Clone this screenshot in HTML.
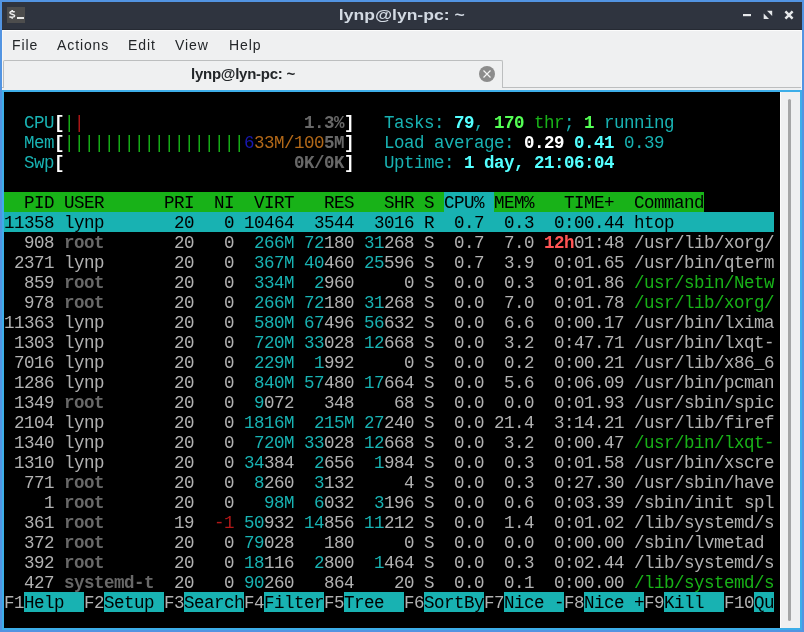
<!DOCTYPE html>
<html><head><meta charset="utf-8">
<style>
html,body{margin:0;padding:0;}
body{will-change:transform;width:804px;height:632px;position:relative;overflow:hidden;background:#5294e2;font-family:"Liberation Sans",sans-serif;}
.a{position:absolute;}
#title{left:2px;top:2px;width:800px;height:28px;background:#2f343f;}
#title .bot{left:0;top:27px;width:800px;height:1px;background:#262a33;}
#icon{left:5px;top:5px;width:18px;height:16px;background:#4d4d4d;}
#ttext{left:0;top:4px;width:800px;text-align:center;color:#d3dae3;font-weight:bold;font-size:15px;line-height:18px;transform:scaleX(1.17);transform-origin:401.5px 0;}
#menu{left:2px;top:30px;width:800px;height:60px;background:#eff0f1;}
#menu .hl{left:0;top:0;width:800px;height:1px;background:#fcfcfc;}
#menu .hl2{left:0;top:0;width:1px;height:60px;background:#f8f6f4;}
.mi{position:absolute;top:5px;font-size:14px;line-height:20px;color:#232629;letter-spacing:0.9px;}
#tabline{left:0;top:57px;width:799px;height:1px;background:#bcbebf;}
#tab{left:1px;top:30px;width:500px;height:28px;background:#eff0f1;border:1px solid #bcbebf;border-bottom:none;border-radius:2px 2px 0 0;box-sizing:border-box;}
#tabtext{left:-9px;top:36px;width:500px;text-align:center;font-weight:bold;font-size:15px;line-height:16px;color:#232629;letter-spacing:-0.25px;}
#tabclose{left:477px;top:36px;width:16px;height:16px;border-radius:50%;background:#8c8c8c;}
#frame{left:2px;top:90px;width:800px;height:540px;background:#3daee9;}
#term{left:4px;top:92px;width:776px;height:536px;background:#000;overflow:hidden;}
#term span{position:absolute;height:20px;line-height:22px;white-space:pre;font-family:"Liberation Mono",monospace;font-size:17.5px;letter-spacing:-0.5px;}
#sb{left:780px;top:92px;width:20px;height:536px;background:#eff0f1;}
#sb .l{left:0;top:0;width:1px;height:536px;background:#fcfcfc;}
#sb .h{left:8px;top:7px;width:3px;height:522px;border-radius:2px;background:#a5a6a7;}
</style></head><body>
<div id="title" class="a">
  <div class="a bot"></div>
  <div id="icon" class="a">
    <svg width="18" height="16" viewBox="0 0 18 16" style="position:absolute;left:0;top:0">
      <path d="M7.7,5.1 C6.8,4.3 3.0,4.1 2.9,5.9 C2.8,7.4 7.7,7.0 7.7,8.7 C7.7,10.4 3.4,10.4 2.4,9.7" stroke="#eeeeee" stroke-width="1.45" fill="none"/><path d="M5.2,3.1 V4.6 M5.2,10.2 V11.7" stroke="#eeeeee" stroke-width="1.6" fill="none"/>
      <rect x="10" y="10" width="7" height="2" fill="#e8e8e8"/>
    </svg>
  </div>
  <div id="ttext" class="a">lynp@lyn-pc: ~</div>
  <svg class="a" style="left:0;top:0" width="800" height="28">
    <rect x="741" y="12" width="8" height="2.2" fill="#e6e8ea"/>
    <polygon points="765,8.7 770.2,8.7 770.2,14" fill="#e6e8ea"/>
    <polygon points="761.7,11.5 761.7,17 767,17" fill="#e6e8ea"/>
    <path d="M783.4,9.4 L790.6,16.6 M790.6,9.4 L783.4,16.6" stroke="#e6e8ea" stroke-width="2.5" stroke-linecap="butt"/>
  </svg>
</div>
<div id="menu" class="a">
  <div class="a hl"></div>
  <div class="a hl2"></div><div class="a" style="left:799px;top:0;width:1px;height:60px;background:#f8f6f4"></div>
  <div class="mi" style="left:10px">File</div>
  <div class="mi" style="left:55px">Actions</div>
  <div class="mi" style="left:126px">Edit</div>
  <div class="mi" style="left:173px">View</div>
  <div class="mi" style="left:227px">Help</div>
  <div id="tabline" class="a"></div>
  <div id="tab" class="a"></div>
  <div id="tabtext" class="a">lynp@lyn-pc: ~</div>
  <div id="tabclose" class="a">
    <svg width="16" height="16" style="position:absolute;left:0;top:0"><path d="M4.5,4.5 L11.5,11.5 M11.5,4.5 L4.5,11.5" stroke="#f4f4f4" stroke-width="1.2"/></svg>
  </div>
</div>
<div id="frame" class="a"></div>
<div id="term" class="a">
<span style="left:20px;top:20px;width:30px;color:#18b2b2;">CPU</span>
<span style="left:50px;top:20px;width:10px;color:#ffffff;font-weight:bold;">[</span>
<span style="left:60px;top:20px;width:10px;color:#18b218;">|</span>
<span style="left:70px;top:20px;width:10px;color:#b21818;">|</span>
<span style="left:300px;top:20px;width:40px;color:#686868;font-weight:bold;">1.3%</span>
<span style="left:340px;top:20px;width:10px;color:#ffffff;font-weight:bold;">]</span>
<span style="left:20px;top:40px;width:30px;color:#18b2b2;">Mem</span>
<span style="left:50px;top:40px;width:10px;color:#ffffff;font-weight:bold;">[</span>
<span style="left:60px;top:40px;width:180px;color:#18b218;">||||||||||||||||||</span>
<span style="left:240px;top:40px;width:10px;color:#1818b2;">6</span>
<span style="left:250px;top:40px;width:70px;color:#b26818;">33M/100</span>
<span style="left:320px;top:40px;width:20px;color:#686868;font-weight:bold;">5M</span>
<span style="left:340px;top:40px;width:10px;color:#ffffff;font-weight:bold;">]</span>
<span style="left:20px;top:60px;width:30px;color:#18b2b2;">Swp</span>
<span style="left:50px;top:60px;width:10px;color:#ffffff;font-weight:bold;">[</span>
<span style="left:290px;top:60px;width:50px;color:#686868;font-weight:bold;">0K/0K</span>
<span style="left:340px;top:60px;width:10px;color:#ffffff;font-weight:bold;">]</span>
<span style="left:380px;top:20px;width:70px;color:#18b2b2;">Tasks: </span>
<span style="left:450px;top:20px;width:20px;color:#54ffff;font-weight:bold;">79</span>
<span style="left:470px;top:20px;width:20px;color:#18b2b2;">, </span>
<span style="left:490px;top:20px;width:30px;color:#54ff54;font-weight:bold;">170</span>
<span style="left:530px;top:20px;width:30px;color:#18b218;">thr</span>
<span style="left:560px;top:20px;width:20px;color:#18b2b2;">; </span>
<span style="left:580px;top:20px;width:10px;color:#54ff54;font-weight:bold;">1</span>
<span style="left:600px;top:20px;width:70px;color:#18b2b2;">running</span>
<span style="left:380px;top:40px;width:140px;color:#18b2b2;">Load average: </span>
<span style="left:520px;top:40px;width:40px;color:#ffffff;font-weight:bold;">0.29</span>
<span style="left:570px;top:40px;width:40px;color:#54ffff;font-weight:bold;">0.41</span>
<span style="left:620px;top:40px;width:40px;color:#18b2b2;">0.39</span>
<span style="left:380px;top:60px;width:80px;color:#18b2b2;">Uptime: </span>
<span style="left:460px;top:60px;width:150px;color:#54ffff;font-weight:bold;">1 day, 21:06:04</span>
<span style="left:0px;top:100px;width:440px;color:#000000;background:#18b218;">  PID USER      PRI  NI  VIRT   RES   SHR S </span>
<span style="left:440px;top:100px;width:50px;color:#000000;background:#18b2b2;">CPU% </span>
<span style="left:490px;top:100px;width:210px;color:#000000;background:#18b218;">MEM%   TIME+  Command</span>
<span style="left:0px;top:120px;width:770px;color:#000000;background:#18b2b2;">11358 lynp       20   0 10464  3544  3016 R  0.7  0.3  0:00.44 htop          </span>
<span style="left:0px;top:140px;width:50px;color:#b2b2b2;">  908</span>
<span style="left:60px;top:140px;width:40px;color:#686868;font-weight:bold;">root</span>
<span style="left:160px;top:140px;width:30px;color:#b2b2b2;"> 20</span>
<span style="left:200px;top:140px;width:30px;color:#b2b2b2;">  0</span>
<span style="left:240px;top:140px;width:50px;color:#18b2b2;"> 266M</span>
<span style="left:300px;top:140px;width:20px;color:#18b2b2;">72</span>
<span style="left:320px;top:140px;width:30px;color:#b2b2b2;">180</span>
<span style="left:360px;top:140px;width:20px;color:#18b2b2;">31</span>
<span style="left:380px;top:140px;width:30px;color:#b2b2b2;">268</span>
<span style="left:420px;top:140px;width:10px;color:#b2b2b2;">S</span>
<span style="left:440px;top:140px;width:40px;color:#b2b2b2;"> 0.7</span>
<span style="left:490px;top:140px;width:40px;color:#b2b2b2;"> 7.0</span>
<span style="left:540px;top:140px;width:30px;color:#ff5454;font-weight:bold;">12h</span>
<span style="left:570px;top:140px;width:50px;color:#b2b2b2;">01:48</span>
<span style="left:630px;top:140px;width:140px;color:#b2b2b2;">/usr/lib/xorg/</span>
<span style="left:0px;top:160px;width:50px;color:#b2b2b2;"> 2371</span>
<span style="left:60px;top:160px;width:40px;color:#b2b2b2;">lynp</span>
<span style="left:160px;top:160px;width:30px;color:#b2b2b2;"> 20</span>
<span style="left:200px;top:160px;width:30px;color:#b2b2b2;">  0</span>
<span style="left:240px;top:160px;width:50px;color:#18b2b2;"> 367M</span>
<span style="left:300px;top:160px;width:20px;color:#18b2b2;">40</span>
<span style="left:320px;top:160px;width:30px;color:#b2b2b2;">460</span>
<span style="left:360px;top:160px;width:20px;color:#18b2b2;">25</span>
<span style="left:380px;top:160px;width:30px;color:#b2b2b2;">596</span>
<span style="left:420px;top:160px;width:10px;color:#b2b2b2;">S</span>
<span style="left:440px;top:160px;width:40px;color:#b2b2b2;"> 0.7</span>
<span style="left:490px;top:160px;width:40px;color:#b2b2b2;"> 3.9</span>
<span style="left:540px;top:160px;width:80px;color:#b2b2b2;"> 0:01.65</span>
<span style="left:630px;top:160px;width:140px;color:#b2b2b2;">/usr/bin/qterm</span>
<span style="left:0px;top:180px;width:50px;color:#b2b2b2;">  859</span>
<span style="left:60px;top:180px;width:40px;color:#686868;font-weight:bold;">root</span>
<span style="left:160px;top:180px;width:30px;color:#b2b2b2;"> 20</span>
<span style="left:200px;top:180px;width:30px;color:#b2b2b2;">  0</span>
<span style="left:240px;top:180px;width:50px;color:#18b2b2;"> 334M</span>
<span style="left:310px;top:180px;width:10px;color:#18b2b2;">2</span>
<span style="left:320px;top:180px;width:30px;color:#b2b2b2;">960</span>
<span style="left:400px;top:180px;width:10px;color:#b2b2b2;">0</span>
<span style="left:420px;top:180px;width:10px;color:#b2b2b2;">S</span>
<span style="left:440px;top:180px;width:40px;color:#b2b2b2;"> 0.0</span>
<span style="left:490px;top:180px;width:40px;color:#b2b2b2;"> 0.3</span>
<span style="left:540px;top:180px;width:80px;color:#b2b2b2;"> 0:01.86</span>
<span style="left:630px;top:180px;width:140px;color:#18b218;">/usr/sbin/Netw</span>
<span style="left:0px;top:200px;width:50px;color:#b2b2b2;">  978</span>
<span style="left:60px;top:200px;width:40px;color:#686868;font-weight:bold;">root</span>
<span style="left:160px;top:200px;width:30px;color:#b2b2b2;"> 20</span>
<span style="left:200px;top:200px;width:30px;color:#b2b2b2;">  0</span>
<span style="left:240px;top:200px;width:50px;color:#18b2b2;"> 266M</span>
<span style="left:300px;top:200px;width:20px;color:#18b2b2;">72</span>
<span style="left:320px;top:200px;width:30px;color:#b2b2b2;">180</span>
<span style="left:360px;top:200px;width:20px;color:#18b2b2;">31</span>
<span style="left:380px;top:200px;width:30px;color:#b2b2b2;">268</span>
<span style="left:420px;top:200px;width:10px;color:#b2b2b2;">S</span>
<span style="left:440px;top:200px;width:40px;color:#b2b2b2;"> 0.0</span>
<span style="left:490px;top:200px;width:40px;color:#b2b2b2;"> 7.0</span>
<span style="left:540px;top:200px;width:80px;color:#b2b2b2;"> 0:01.78</span>
<span style="left:630px;top:200px;width:140px;color:#18b218;">/usr/lib/xorg/</span>
<span style="left:0px;top:220px;width:50px;color:#b2b2b2;">11363</span>
<span style="left:60px;top:220px;width:40px;color:#b2b2b2;">lynp</span>
<span style="left:160px;top:220px;width:30px;color:#b2b2b2;"> 20</span>
<span style="left:200px;top:220px;width:30px;color:#b2b2b2;">  0</span>
<span style="left:240px;top:220px;width:50px;color:#18b2b2;"> 580M</span>
<span style="left:300px;top:220px;width:20px;color:#18b2b2;">67</span>
<span style="left:320px;top:220px;width:30px;color:#b2b2b2;">496</span>
<span style="left:360px;top:220px;width:20px;color:#18b2b2;">56</span>
<span style="left:380px;top:220px;width:30px;color:#b2b2b2;">632</span>
<span style="left:420px;top:220px;width:10px;color:#b2b2b2;">S</span>
<span style="left:440px;top:220px;width:40px;color:#b2b2b2;"> 0.0</span>
<span style="left:490px;top:220px;width:40px;color:#b2b2b2;"> 6.6</span>
<span style="left:540px;top:220px;width:80px;color:#b2b2b2;"> 0:00.17</span>
<span style="left:630px;top:220px;width:140px;color:#b2b2b2;">/usr/bin/lxima</span>
<span style="left:0px;top:240px;width:50px;color:#b2b2b2;"> 1303</span>
<span style="left:60px;top:240px;width:40px;color:#b2b2b2;">lynp</span>
<span style="left:160px;top:240px;width:30px;color:#b2b2b2;"> 20</span>
<span style="left:200px;top:240px;width:30px;color:#b2b2b2;">  0</span>
<span style="left:240px;top:240px;width:50px;color:#18b2b2;"> 720M</span>
<span style="left:300px;top:240px;width:20px;color:#18b2b2;">33</span>
<span style="left:320px;top:240px;width:30px;color:#b2b2b2;">028</span>
<span style="left:360px;top:240px;width:20px;color:#18b2b2;">12</span>
<span style="left:380px;top:240px;width:30px;color:#b2b2b2;">668</span>
<span style="left:420px;top:240px;width:10px;color:#b2b2b2;">S</span>
<span style="left:440px;top:240px;width:40px;color:#b2b2b2;"> 0.0</span>
<span style="left:490px;top:240px;width:40px;color:#b2b2b2;"> 3.2</span>
<span style="left:540px;top:240px;width:80px;color:#b2b2b2;"> 0:47.71</span>
<span style="left:630px;top:240px;width:140px;color:#b2b2b2;">/usr/bin/lxqt-</span>
<span style="left:0px;top:260px;width:50px;color:#b2b2b2;"> 7016</span>
<span style="left:60px;top:260px;width:40px;color:#b2b2b2;">lynp</span>
<span style="left:160px;top:260px;width:30px;color:#b2b2b2;"> 20</span>
<span style="left:200px;top:260px;width:30px;color:#b2b2b2;">  0</span>
<span style="left:240px;top:260px;width:50px;color:#18b2b2;"> 229M</span>
<span style="left:310px;top:260px;width:10px;color:#18b2b2;">1</span>
<span style="left:320px;top:260px;width:30px;color:#b2b2b2;">992</span>
<span style="left:400px;top:260px;width:10px;color:#b2b2b2;">0</span>
<span style="left:420px;top:260px;width:10px;color:#b2b2b2;">S</span>
<span style="left:440px;top:260px;width:40px;color:#b2b2b2;"> 0.0</span>
<span style="left:490px;top:260px;width:40px;color:#b2b2b2;"> 0.2</span>
<span style="left:540px;top:260px;width:80px;color:#b2b2b2;"> 0:00.21</span>
<span style="left:630px;top:260px;width:140px;color:#b2b2b2;">/usr/lib/x86_6</span>
<span style="left:0px;top:280px;width:50px;color:#b2b2b2;"> 1286</span>
<span style="left:60px;top:280px;width:40px;color:#b2b2b2;">lynp</span>
<span style="left:160px;top:280px;width:30px;color:#b2b2b2;"> 20</span>
<span style="left:200px;top:280px;width:30px;color:#b2b2b2;">  0</span>
<span style="left:240px;top:280px;width:50px;color:#18b2b2;"> 840M</span>
<span style="left:300px;top:280px;width:20px;color:#18b2b2;">57</span>
<span style="left:320px;top:280px;width:30px;color:#b2b2b2;">480</span>
<span style="left:360px;top:280px;width:20px;color:#18b2b2;">17</span>
<span style="left:380px;top:280px;width:30px;color:#b2b2b2;">664</span>
<span style="left:420px;top:280px;width:10px;color:#b2b2b2;">S</span>
<span style="left:440px;top:280px;width:40px;color:#b2b2b2;"> 0.0</span>
<span style="left:490px;top:280px;width:40px;color:#b2b2b2;"> 5.6</span>
<span style="left:540px;top:280px;width:80px;color:#b2b2b2;"> 0:06.09</span>
<span style="left:630px;top:280px;width:140px;color:#b2b2b2;">/usr/bin/pcman</span>
<span style="left:0px;top:300px;width:50px;color:#b2b2b2;"> 1349</span>
<span style="left:60px;top:300px;width:40px;color:#686868;font-weight:bold;">root</span>
<span style="left:160px;top:300px;width:30px;color:#b2b2b2;"> 20</span>
<span style="left:200px;top:300px;width:30px;color:#b2b2b2;">  0</span>
<span style="left:250px;top:300px;width:10px;color:#18b2b2;">9</span>
<span style="left:260px;top:300px;width:30px;color:#b2b2b2;">072</span>
<span style="left:320px;top:300px;width:30px;color:#b2b2b2;">348</span>
<span style="left:390px;top:300px;width:20px;color:#b2b2b2;">68</span>
<span style="left:420px;top:300px;width:10px;color:#b2b2b2;">S</span>
<span style="left:440px;top:300px;width:40px;color:#b2b2b2;"> 0.0</span>
<span style="left:490px;top:300px;width:40px;color:#b2b2b2;"> 0.0</span>
<span style="left:540px;top:300px;width:80px;color:#b2b2b2;"> 0:01.93</span>
<span style="left:630px;top:300px;width:140px;color:#b2b2b2;">/usr/sbin/spic</span>
<span style="left:0px;top:320px;width:50px;color:#b2b2b2;"> 2104</span>
<span style="left:60px;top:320px;width:40px;color:#b2b2b2;">lynp</span>
<span style="left:160px;top:320px;width:30px;color:#b2b2b2;"> 20</span>
<span style="left:200px;top:320px;width:30px;color:#b2b2b2;">  0</span>
<span style="left:240px;top:320px;width:50px;color:#18b2b2;">1816M</span>
<span style="left:300px;top:320px;width:50px;color:#18b2b2;"> 215M</span>
<span style="left:360px;top:320px;width:20px;color:#18b2b2;">27</span>
<span style="left:380px;top:320px;width:30px;color:#b2b2b2;">240</span>
<span style="left:420px;top:320px;width:10px;color:#b2b2b2;">S</span>
<span style="left:440px;top:320px;width:40px;color:#b2b2b2;"> 0.0</span>
<span style="left:490px;top:320px;width:40px;color:#b2b2b2;">21.4</span>
<span style="left:540px;top:320px;width:80px;color:#b2b2b2;"> 3:14.21</span>
<span style="left:630px;top:320px;width:140px;color:#b2b2b2;">/usr/lib/firef</span>
<span style="left:0px;top:340px;width:50px;color:#b2b2b2;"> 1340</span>
<span style="left:60px;top:340px;width:40px;color:#b2b2b2;">lynp</span>
<span style="left:160px;top:340px;width:30px;color:#b2b2b2;"> 20</span>
<span style="left:200px;top:340px;width:30px;color:#b2b2b2;">  0</span>
<span style="left:240px;top:340px;width:50px;color:#18b2b2;"> 720M</span>
<span style="left:300px;top:340px;width:20px;color:#18b2b2;">33</span>
<span style="left:320px;top:340px;width:30px;color:#b2b2b2;">028</span>
<span style="left:360px;top:340px;width:20px;color:#18b2b2;">12</span>
<span style="left:380px;top:340px;width:30px;color:#b2b2b2;">668</span>
<span style="left:420px;top:340px;width:10px;color:#b2b2b2;">S</span>
<span style="left:440px;top:340px;width:40px;color:#b2b2b2;"> 0.0</span>
<span style="left:490px;top:340px;width:40px;color:#b2b2b2;"> 3.2</span>
<span style="left:540px;top:340px;width:80px;color:#b2b2b2;"> 0:00.47</span>
<span style="left:630px;top:340px;width:140px;color:#18b218;">/usr/bin/lxqt-</span>
<span style="left:0px;top:360px;width:50px;color:#b2b2b2;"> 1310</span>
<span style="left:60px;top:360px;width:40px;color:#b2b2b2;">lynp</span>
<span style="left:160px;top:360px;width:30px;color:#b2b2b2;"> 20</span>
<span style="left:200px;top:360px;width:30px;color:#b2b2b2;">  0</span>
<span style="left:240px;top:360px;width:20px;color:#18b2b2;">34</span>
<span style="left:260px;top:360px;width:30px;color:#b2b2b2;">384</span>
<span style="left:310px;top:360px;width:10px;color:#18b2b2;">2</span>
<span style="left:320px;top:360px;width:30px;color:#b2b2b2;">656</span>
<span style="left:370px;top:360px;width:10px;color:#18b2b2;">1</span>
<span style="left:380px;top:360px;width:30px;color:#b2b2b2;">984</span>
<span style="left:420px;top:360px;width:10px;color:#b2b2b2;">S</span>
<span style="left:440px;top:360px;width:40px;color:#b2b2b2;"> 0.0</span>
<span style="left:490px;top:360px;width:40px;color:#b2b2b2;"> 0.3</span>
<span style="left:540px;top:360px;width:80px;color:#b2b2b2;"> 0:01.58</span>
<span style="left:630px;top:360px;width:140px;color:#b2b2b2;">/usr/bin/xscre</span>
<span style="left:0px;top:380px;width:50px;color:#b2b2b2;">  771</span>
<span style="left:60px;top:380px;width:40px;color:#686868;font-weight:bold;">root</span>
<span style="left:160px;top:380px;width:30px;color:#b2b2b2;"> 20</span>
<span style="left:200px;top:380px;width:30px;color:#b2b2b2;">  0</span>
<span style="left:250px;top:380px;width:10px;color:#18b2b2;">8</span>
<span style="left:260px;top:380px;width:30px;color:#b2b2b2;">260</span>
<span style="left:310px;top:380px;width:10px;color:#18b2b2;">3</span>
<span style="left:320px;top:380px;width:30px;color:#b2b2b2;">132</span>
<span style="left:400px;top:380px;width:10px;color:#b2b2b2;">4</span>
<span style="left:420px;top:380px;width:10px;color:#b2b2b2;">S</span>
<span style="left:440px;top:380px;width:40px;color:#b2b2b2;"> 0.0</span>
<span style="left:490px;top:380px;width:40px;color:#b2b2b2;"> 0.3</span>
<span style="left:540px;top:380px;width:80px;color:#b2b2b2;"> 0:27.30</span>
<span style="left:630px;top:380px;width:140px;color:#b2b2b2;">/usr/sbin/have</span>
<span style="left:0px;top:400px;width:50px;color:#b2b2b2;">    1</span>
<span style="left:60px;top:400px;width:40px;color:#686868;font-weight:bold;">root</span>
<span style="left:160px;top:400px;width:30px;color:#b2b2b2;"> 20</span>
<span style="left:200px;top:400px;width:30px;color:#b2b2b2;">  0</span>
<span style="left:240px;top:400px;width:50px;color:#18b2b2;">  98M</span>
<span style="left:310px;top:400px;width:10px;color:#18b2b2;">6</span>
<span style="left:320px;top:400px;width:30px;color:#b2b2b2;">032</span>
<span style="left:370px;top:400px;width:10px;color:#18b2b2;">3</span>
<span style="left:380px;top:400px;width:30px;color:#b2b2b2;">196</span>
<span style="left:420px;top:400px;width:10px;color:#b2b2b2;">S</span>
<span style="left:440px;top:400px;width:40px;color:#b2b2b2;"> 0.0</span>
<span style="left:490px;top:400px;width:40px;color:#b2b2b2;"> 0.6</span>
<span style="left:540px;top:400px;width:80px;color:#b2b2b2;"> 0:03.39</span>
<span style="left:630px;top:400px;width:140px;color:#b2b2b2;">/sbin/init spl</span>
<span style="left:0px;top:420px;width:50px;color:#b2b2b2;">  361</span>
<span style="left:60px;top:420px;width:40px;color:#686868;font-weight:bold;">root</span>
<span style="left:160px;top:420px;width:30px;color:#b2b2b2;"> 19</span>
<span style="left:200px;top:420px;width:30px;color:#b21818;"> -1</span>
<span style="left:240px;top:420px;width:20px;color:#18b2b2;">50</span>
<span style="left:260px;top:420px;width:30px;color:#b2b2b2;">932</span>
<span style="left:300px;top:420px;width:20px;color:#18b2b2;">14</span>
<span style="left:320px;top:420px;width:30px;color:#b2b2b2;">856</span>
<span style="left:360px;top:420px;width:20px;color:#18b2b2;">11</span>
<span style="left:380px;top:420px;width:30px;color:#b2b2b2;">212</span>
<span style="left:420px;top:420px;width:10px;color:#b2b2b2;">S</span>
<span style="left:440px;top:420px;width:40px;color:#b2b2b2;"> 0.0</span>
<span style="left:490px;top:420px;width:40px;color:#b2b2b2;"> 1.4</span>
<span style="left:540px;top:420px;width:80px;color:#b2b2b2;"> 0:01.02</span>
<span style="left:630px;top:420px;width:140px;color:#b2b2b2;">/lib/systemd/s</span>
<span style="left:0px;top:440px;width:50px;color:#b2b2b2;">  372</span>
<span style="left:60px;top:440px;width:40px;color:#686868;font-weight:bold;">root</span>
<span style="left:160px;top:440px;width:30px;color:#b2b2b2;"> 20</span>
<span style="left:200px;top:440px;width:30px;color:#b2b2b2;">  0</span>
<span style="left:240px;top:440px;width:20px;color:#18b2b2;">79</span>
<span style="left:260px;top:440px;width:30px;color:#b2b2b2;">028</span>
<span style="left:320px;top:440px;width:30px;color:#b2b2b2;">180</span>
<span style="left:400px;top:440px;width:10px;color:#b2b2b2;">0</span>
<span style="left:420px;top:440px;width:10px;color:#b2b2b2;">S</span>
<span style="left:440px;top:440px;width:40px;color:#b2b2b2;"> 0.0</span>
<span style="left:490px;top:440px;width:40px;color:#b2b2b2;"> 0.0</span>
<span style="left:540px;top:440px;width:80px;color:#b2b2b2;"> 0:00.00</span>
<span style="left:630px;top:440px;width:130px;color:#b2b2b2;">/sbin/lvmetad</span>
<span style="left:0px;top:460px;width:50px;color:#b2b2b2;">  392</span>
<span style="left:60px;top:460px;width:40px;color:#686868;font-weight:bold;">root</span>
<span style="left:160px;top:460px;width:30px;color:#b2b2b2;"> 20</span>
<span style="left:200px;top:460px;width:30px;color:#b2b2b2;">  0</span>
<span style="left:240px;top:460px;width:20px;color:#18b2b2;">18</span>
<span style="left:260px;top:460px;width:30px;color:#b2b2b2;">116</span>
<span style="left:310px;top:460px;width:10px;color:#18b2b2;">2</span>
<span style="left:320px;top:460px;width:30px;color:#b2b2b2;">800</span>
<span style="left:370px;top:460px;width:10px;color:#18b2b2;">1</span>
<span style="left:380px;top:460px;width:30px;color:#b2b2b2;">464</span>
<span style="left:420px;top:460px;width:10px;color:#b2b2b2;">S</span>
<span style="left:440px;top:460px;width:40px;color:#b2b2b2;"> 0.0</span>
<span style="left:490px;top:460px;width:40px;color:#b2b2b2;"> 0.3</span>
<span style="left:540px;top:460px;width:80px;color:#b2b2b2;"> 0:02.44</span>
<span style="left:630px;top:460px;width:140px;color:#b2b2b2;">/lib/systemd/s</span>
<span style="left:0px;top:480px;width:50px;color:#b2b2b2;">  427</span>
<span style="left:60px;top:480px;width:90px;color:#686868;font-weight:bold;">systemd-t</span>
<span style="left:160px;top:480px;width:30px;color:#b2b2b2;"> 20</span>
<span style="left:200px;top:480px;width:30px;color:#b2b2b2;">  0</span>
<span style="left:240px;top:480px;width:20px;color:#18b2b2;">90</span>
<span style="left:260px;top:480px;width:30px;color:#b2b2b2;">260</span>
<span style="left:320px;top:480px;width:30px;color:#b2b2b2;">864</span>
<span style="left:390px;top:480px;width:20px;color:#b2b2b2;">20</span>
<span style="left:420px;top:480px;width:10px;color:#b2b2b2;">S</span>
<span style="left:440px;top:480px;width:40px;color:#b2b2b2;"> 0.0</span>
<span style="left:490px;top:480px;width:40px;color:#b2b2b2;"> 0.1</span>
<span style="left:540px;top:480px;width:80px;color:#b2b2b2;"> 0:00.00</span>
<span style="left:630px;top:480px;width:140px;color:#18b218;">/lib/systemd/s</span>
<span style="left:0px;top:500px;width:20px;color:#b2b2b2;">F1</span>
<span style="left:20px;top:500px;width:60px;color:#000000;background:#18b2b2;">Help  </span>
<span style="left:80px;top:500px;width:20px;color:#b2b2b2;">F2</span>
<span style="left:100px;top:500px;width:60px;color:#000000;background:#18b2b2;">Setup </span>
<span style="left:160px;top:500px;width:20px;color:#b2b2b2;">F3</span>
<span style="left:180px;top:500px;width:60px;color:#000000;background:#18b2b2;">Search</span>
<span style="left:240px;top:500px;width:20px;color:#b2b2b2;">F4</span>
<span style="left:260px;top:500px;width:60px;color:#000000;background:#18b2b2;">Filter</span>
<span style="left:320px;top:500px;width:20px;color:#b2b2b2;">F5</span>
<span style="left:340px;top:500px;width:60px;color:#000000;background:#18b2b2;">Tree  </span>
<span style="left:400px;top:500px;width:20px;color:#b2b2b2;">F6</span>
<span style="left:420px;top:500px;width:60px;color:#000000;background:#18b2b2;">SortBy</span>
<span style="left:480px;top:500px;width:20px;color:#b2b2b2;">F7</span>
<span style="left:500px;top:500px;width:60px;color:#000000;background:#18b2b2;">Nice -</span>
<span style="left:560px;top:500px;width:20px;color:#b2b2b2;">F8</span>
<span style="left:580px;top:500px;width:60px;color:#000000;background:#18b2b2;">Nice +</span>
<span style="left:640px;top:500px;width:20px;color:#b2b2b2;">F9</span>
<span style="left:660px;top:500px;width:60px;color:#000000;background:#18b2b2;">Kill  </span>
<span style="left:720px;top:500px;width:30px;color:#b2b2b2;">F10</span>
<span style="left:750px;top:500px;width:20px;color:#000000;background:#18b2b2;">Qu</span>
</div>
<div id="sb" class="a"><div class="a l"></div><div class="a h"></div></div>
</body></html>
